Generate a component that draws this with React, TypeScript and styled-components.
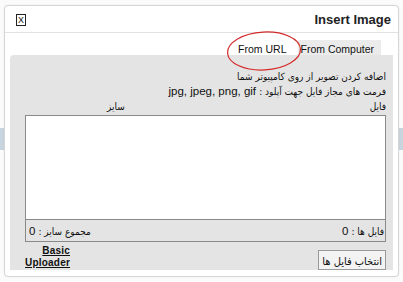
import styled, { createGlobalStyle } from 'styled-components'

const GlobalStyle = createGlobalStyle`
  html, body {
    margin: 0;
    padding: 0;
    background: #fbfbfb;
  }
  body {
    width: 403px;
    height: 282px;
    overflow: hidden;
    font-family: "Liberation Sans", "DejaVu Sans", sans-serif;
    font-size: 11px;
    color: #111;
  }
`

function App () {
  return (
    <Page>
      <GlobalStyle />
      <PageBar $top={128} $height={22} />
      <Dialog>
        <Header>
          <CloseButton>X</CloseButton>
          <Title>Insert Image</Title>
        </Header>
        <TabRow>
          <Tab>From Computer</Tab>
          <Tab $active>From URL</Tab>
          <Circle width="78" height="42" viewBox="0 0 78 42">
            <ellipse cx="39" cy="21" rx="36.5" ry="19" fill="none" stroke="#d42a2a" strokeWidth="1.2" transform="rotate(-3 39 21)" />
          </Circle>
        </TabRow>
        <Panel>
          <Line><Fa>اضافه کردن تصویر از روی کامپیوتر شما</Fa></Line>
          <Line><Fa>فرمت های مجاز فایل جهت آپلود :</Fa> <Latin>jpg, jpeg, png, gif</Latin></Line>
          <ColumnHeads>
            <Fa>فایل</Fa>
            <Fa>سایز</Fa>
          </ColumnHeads>
          <FileList>
            <FileArea />
            <ListFooter>
              <span><Fa>فایل ها :</Fa> <Latin>0</Latin></span>
              <span><Fa>مجموع سایز :</Fa> <Latin>0</Latin></span>
            </ListFooter>
          </FileList>
          <Actions>
            <SelectButton><Fa $size={11}>انتخاب فایل ها</Fa></SelectButton>
            <BasicLink href="#">Basic Uploader</BasicLink>
          </Actions>
        </Panel>
      </Dialog>
    </Page>
  )
}

const Page = styled.div`
  position: relative;
  width: 403px;
  height: 282px;
  display: flow-root;
`
const PageBar = styled.div<{ $top: number, $height: number }>`
  margin-top: ${p => p.$top}px;
  height: ${p => p.$height}px;
  background: #c9d5de;
`
const Dialog = styled.div`
  position: absolute;
  left: 4px;
  top: 5px;
  width: 393px;
  height: 270px;
  background: #fff;
  border: 1px solid #d6d6d6;
  border-radius: 4px;
  box-shadow: 0 0 2px rgba(0, 0, 0, 0.08);
  display: flex;
  flex-direction: column;
`
const Header = styled.div`
  height: 29px;
  border-bottom: 1px solid #e2e2e2;
  display: flex;
  align-items: center;
  justify-content: space-between;
  padding: 0 7px 0 11px;
`
const CloseButton = styled.span`
  width: 8px;
  height: 10px;
  border: 1px solid #222;
  font-size: 9px;
  line-height: 10px;
  text-align: center;
  margin-top: 2px;
`
const Title = styled.span`
  font-size: 13px;
  font-weight: bold;
  color: #222;
  margin-top: 1px;
`
const TabRow = styled.div`
  position: relative;
  height: 24px;
  display: flex;
  flex-direction: row-reverse;
  justify-content: flex-start;
  align-items: flex-end;
  padding-right: 17px;
`
const Tab = styled.div<{ $active?: boolean }>`
  height: 15px;
  line-height: 18px;
  padding: 0 ${p => p.$active ? '12px 0 8px' : '7px 0 2px'};
  background: ${p => p.$active ? '#fff' : '#ebebeb'};
  font-size: 10.5px;
  color: #111;
  position: relative;
  z-index: 1;
`
const Circle = styled.svg`
  position: absolute;
  left: 220px;
  top: -3px;
  z-index: 2;
`
const Fa = styled.span<{ $size?: number }>`
  font-family: "DejaVu Sans Condensed", "DejaVu Sans", sans-serif;
  font-size: ${p => p.$size ?? 10}px;
`
const Latin = styled.span`
  font-family: "Liberation Sans", sans-serif;
  font-size: 11.5px;
`
const Panel = styled.div`
  flex: 1;
  margin: 0 5px 6px 5px;
  background: #e4e4e4;
  border-radius: 4px 0 0 0;
  padding: 14px 7px 0 15px;
  direction: rtl;
  display: flex;
  flex-direction: column;
`
const Line = styled.div`
  line-height: 15px;
  height: 15px;
`
const ColumnHeads = styled.div`
  line-height: 15px;
  height: 15px;
  display: flex;
  justify-content: space-between;
  padding-left: 82px;
`
const FileList = styled.div`
  margin-top: 1px;
  border: 1px solid #8a8a8a;
  display: flex;
  flex-direction: column;
`
const FileArea = styled.div`
  height: 103px;
  background: #fff;
  border-bottom: 1px solid #8a8a8a;
`
const ListFooter = styled.div`
  height: 21px;
  display: flex;
  align-items: center;
  justify-content: space-between;
  padding: 0 1px 0 3px;
`
const Actions = styled.div`
  display: flex;
  justify-content: space-between;
  align-items: flex-start;
  padding-top: 3px;
`
const SelectButton = styled.button`
  margin-top: 5px;
  height: 20px;
  padding: 0 3px;
  background: #f3f3f3;
  border: 1px solid #9a9a9a;
  color: #111;
`
const BasicLink = styled.a`
  width: 45px;
  text-align: right;
  direction: ltr;
  font-weight: bold;
  letter-spacing: 0.2px;
  line-height: 12px;
  color: #111;
  font-size: 10px;
`

export default App
